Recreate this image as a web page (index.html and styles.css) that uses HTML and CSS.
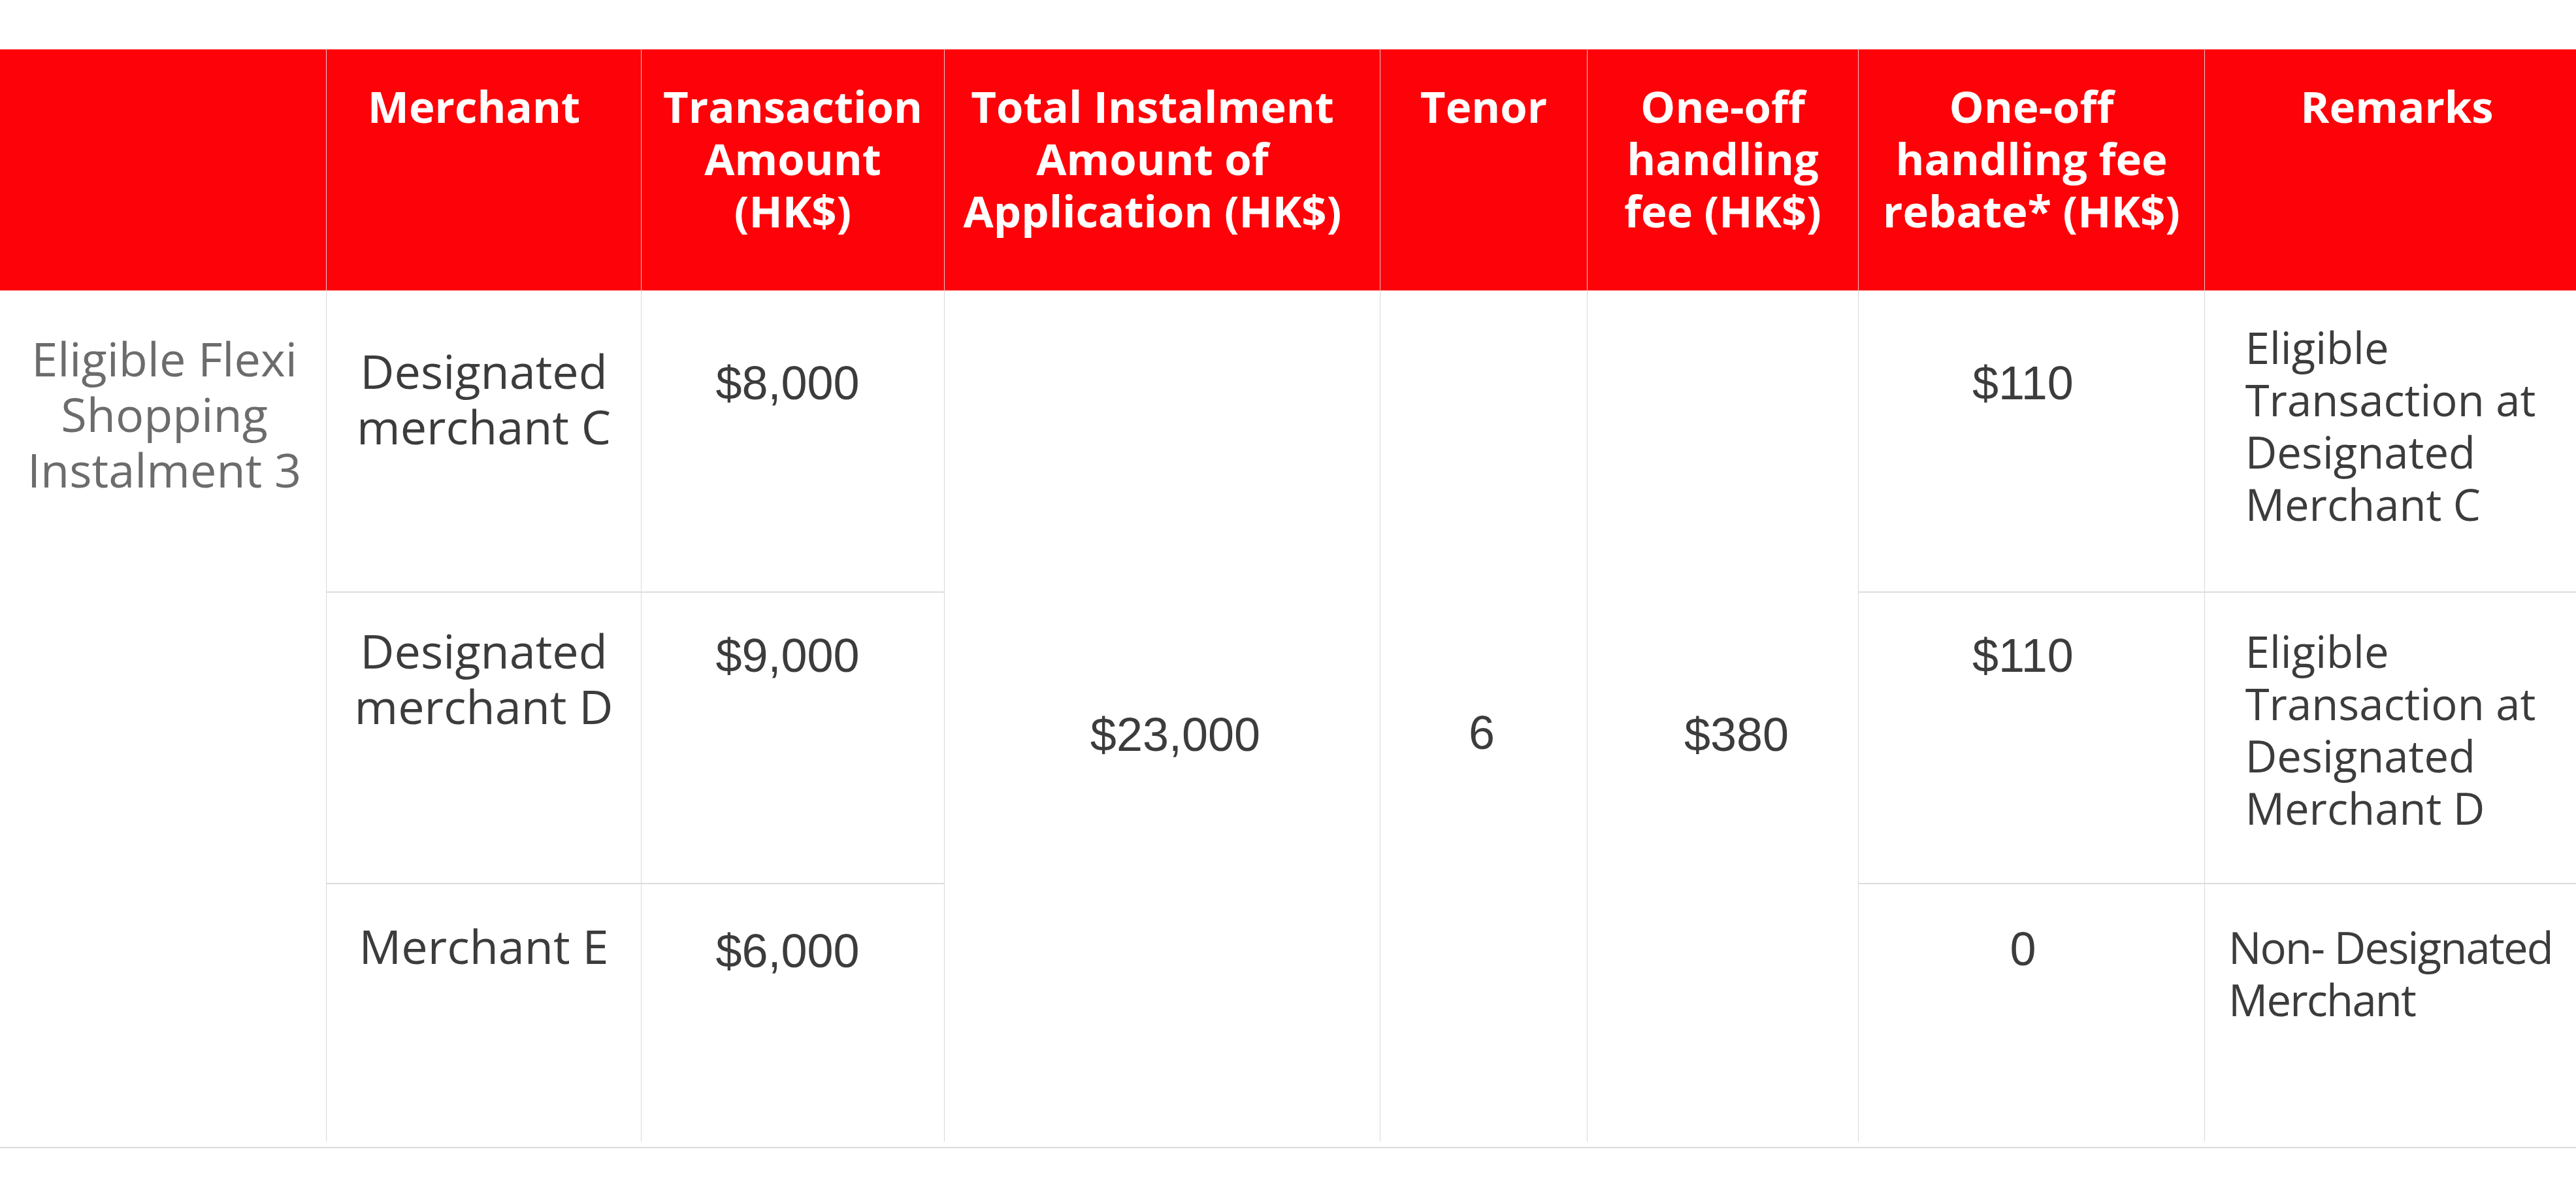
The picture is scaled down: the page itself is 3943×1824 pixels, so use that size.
FILE: index.html
```html
<!DOCTYPE html>
<html lang="en">
<head>
<meta charset="utf-8">
<title>Flexi Shopping Instalment</title>
<link rel="stylesheet" href="styles.css">
</head>
<body>
<div class="table-wrap">
  <table class="fee-table">
    <colgroup>
      <col class="w-cat">
      <col class="w-merchant">
      <col class="w-amount">
      <col class="w-total">
      <col class="w-tenor">
      <col class="w-fee">
      <col class="w-rebate">
      <col class="w-remarks">
    </colgroup>
    <thead>
      <tr class="head">
        <th class="h-cat"></th>
        <th class="h-merchant">Merchant</th>
        <th class="h-amount">Transaction<br>Amount<br>(HK$)</th>
        <th class="h-total">Total Instalment<br>Amount of<br>Application (HK$)</th>
        <th class="h-tenor">Tenor</th>
        <th class="h-fee">One-off<br>handling<br>fee (HK$)</th>
        <th class="h-rebate">One-off<br>handling fee<br>rebate* (HK$)</th>
        <th class="h-remarks">Remarks</th>
      </tr>
    </thead>
    <tbody>
      <tr class="r1">
        <td class="cat" rowspan="3">Eligible Flexi<br>Shopping<br>Instalment 3</td>
        <td class="merchant split">Designated<br>merchant C</td>
        <td class="num amount split">$8,000</td>
        <td class="num mid total" rowspan="3">$23,000</td>
        <td class="num mid tenor" rowspan="3">6</td>
        <td class="num mid fee" rowspan="3">$380</td>
        <td class="num rebate split">$110</td>
        <td class="remarks split"><span class="remark">Eligible<br>Transaction at<br>Designated<br>Merchant C</span></td>
      </tr>
      <tr class="r2">
        <td class="merchant split">Designated<br>merchant D</td>
        <td class="num amount split">$9,000</td>
        <td class="num rebate split">$110</td>
        <td class="remarks split"><span class="remark">Eligible<br>Transaction at<br>Designated<br>Merchant D</span></td>
      </tr>
      <tr class="r3">
        <td class="merchant">Merchant E</td>
        <td class="num amount">$6,000</td>
        <td class="num rebate">0</td>
        <td class="remarks"><span class="remark remark-tight">Non- Designated<br>Merchant</span></td>
      </tr>
    </tbody>
  </table>
</div>
</body>
</html>
```

FILE: styles.css
```css
html, body {
  margin: 0;
  padding: 0;
  background: #ffffff;
}

body {
  font-family: "Open Sans", "Liberation Sans", sans-serif;
}

.table-wrap {
  width: 3943px;
  padding-top: 75px;
  padding-bottom: 8px;
  border-bottom: 2px solid #dcdcdc;
}

.fee-table {
  width: 3943px;
  table-layout: fixed;
  border-collapse: separate;
  border-spacing: 0;
}

.w-cat { width: 499px; }
.w-merchant { width: 482px; }
.w-amount { width: 464px; }
.w-total { width: 667px; }
.w-tenor { width: 317px; }
.w-fee { width: 415px; }
.w-rebate { width: 530px; }
.w-remarks { width: 569px; }

th, td {
  padding: 0 10px;
  vertical-align: top;
  text-align: center;
  white-space: nowrap;
}

/* header */
tr.head { height: 370px; }

.head th {
  background: #fd0309;
  color: #ffffff;
  font-family: "Open Sans", "Liberation Sans", sans-serif;
  font-weight: 700;
  font-size: 67px;
  line-height: 80px;
  padding-top: 46px;
  border-top: 1px solid #ff8a8d;
  border-bottom: 1px solid #ff8a8d;
  border-left: 1px solid #e6c4c5;
}

.head th.h-cat { border-left: 0; }
.head th.h-merchant { padding-right: 40px; }
.head th.h-total { padding-right: 40px; }
.head th.h-remarks { padding-left: 30px; }

/* body */
tr.r1 { height: 462px; }
tr.r2 { height: 446px; }
tr.r3 { height: 394px; }

td {
  color: #3c3c3c;
  font-size: 72px;
  line-height: 85px;
  border-left: 1px solid #d9d9d9;
}

td.split { border-bottom: 2px solid #dcdcdc; }

td.cat {
  border-left: 0;
  color: #6c6c6c;
  padding-top: 61px;
  padding-left: 14px;
}

.num {
  font-family: "Liberation Sans", Arial, sans-serif;
}

td.amount { padding-right: 26px; }
td.rebate { padding-right: 36px; }
td.total { padding-left: 50px; }
td.fee { padding-left: 52px; }
td.tenor { padding-right: 16px; }

td.mid {
  vertical-align: middle;
  padding-top: 56px;
}
td.mid.tenor { padding-top: 50px; }

td.remarks {
  font-size: 67px;
  line-height: 80px;
}

.remark {
  display: inline-block;
  vertical-align: top;
  text-align: left;
}

.remark-tight { letter-spacing: -1.8px; }

.r1 td.merchant { padding-top: 80px; }
.r1 td.amount { padding-top: 99px; }
.r1 td.rebate { padding-top: 99px; }
.r1 td.remarks { padding-top: 46px; }

.r2 td.merchant { padding-top: 46px; }
.r2 td.amount { padding-top: 54px; }
.r2 td.rebate { padding-top: 54px; }
.r2 td.remarks { padding-top: 49px; }

.r3 td.merchant { padding-top: 52px; }
.r3 td.amount { padding-top: 60px; }
.r3 td.rebate { padding-top: 57px; }
.r3 td.remarks { padding-top: 56px; }
```
